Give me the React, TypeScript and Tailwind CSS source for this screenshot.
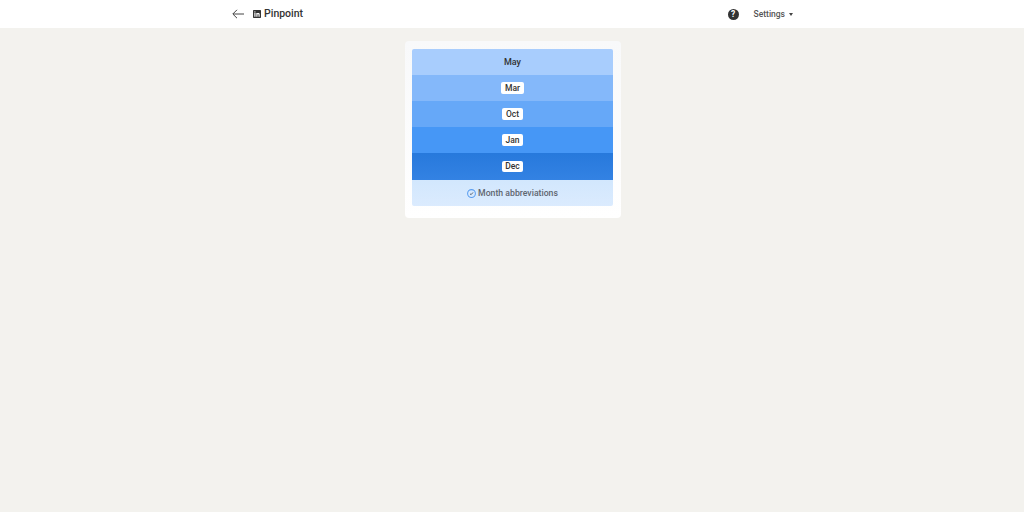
import React from 'react';

const rows = [
  { label: 'Mar', color: 'bg-[#84b8fa]' },
  { label: 'Oct', color: 'bg-[#66a8f8]' },
  { label: 'Jan', color: 'bg-[#4697f6]' },
];

function Chip({ label }: { label: string }) {
  return (
    <span className="bg-white rounded-[2px] px-[3.500px] h-[11.500px] flex items-center justify-center text-[8.5px] font-medium text-[#333] leading-none">
      {label}
    </span>
  );
}

export default function App() {
  return (
    <div className="min-h-[512px] bg-[#f3f2ee] font-['Roboto','Noto_Sans',sans-serif]">
      <header className="h-[28px] bg-white flex items-center pl-[232px] pr-[231px]">
        <svg viewBox="0 0 12 10" className="w-[12px] h-[10px]" fill="none" stroke="#444" strokeWidth="1">
          <path d="M12 5H1M5 .8 .8 5 5 9.200" />
        </svg>
        <div className="ml-[9px] flex items-center gap-[3px]">
          <svg viewBox="0 0 24 24" className="w-[8px] h-[8px]" fill="#333">
            <path d="M2 0h20a2 2 0 0 1 2 2v20a2 2 0 0 1-2 2H2a2 2 0 0 1-2-2V2a2 2 0 0 1 2-2zm2 9v11h3.5V9H4zm1.75-5.2a2 2 0 1 0 0 4 2 2 0 0 0 0-4zM10 9v11h3.5v-6c0-3 3-3 3 0v6H20v-7c0-5-4.8-5-6.500-3V9H10z" fillRule="evenodd" />
          </svg>
          <span className="pt-[1px] text-[10.5px] font-medium text-[#333] leading-none">Pinpoint</span>
        </div>
        <div className="ml-auto flex items-center">
          <span className="w-[11px] h-[11px] rounded-full bg-[#333] text-white text-[8.5px] font-bold flex items-center justify-center leading-none">?</span>
          <span className="ml-[15px] pt-[1px] text-[8.5px] font-medium text-[#555] leading-none">Settings</span>
          <span className="ml-[4px] w-0 h-0 border-x-[2.500px] border-x-transparent border-t-[3px] border-t-[#444]" />
        </div>
      </header>
      <main className="flex justify-center pt-[13px] pl-[1px]">
        <div className="w-[216px] h-[177px] pt-[8px] px-[7.500px] rounded-[4px] bg-gradient-to-b from-[#f8f9fa] to-white">
          <div className="w-[201px] rounded-[2px] overflow-hidden">
            <div className="h-[26px] pt-[1px] bg-[#a8cdfd] flex items-center justify-center text-[9px] font-medium text-[#333]">May</div>
            {rows.map((r) => (
              <div key={r.label} className={`h-[26px] flex items-center justify-center ${r.color}`}>
                <Chip label={r.label} />
              </div>
            ))}
            <div className="h-[27px] bg-gradient-to-b from-[#2779dc] to-[#3382e3] flex items-center justify-center">
              <Chip label="Dec" />
            </div>
            <div className="h-[26px] pt-[1px] bg-gradient-to-b from-[#d2e7fd] to-[#dbebfe] flex items-center justify-center gap-[2px] text-[8.7px] font-medium text-[#5f6670]">
              <svg viewBox="0 0 12 12" className="w-[9px] h-[9px]" fill="none">
                <circle cx="6" cy="6" r="5.2" stroke="#5d9ff0" strokeWidth="1.4" />
                <path d="M4 6.300 5.400 7.600 8 4.600" stroke="#4a5668" strokeWidth="1.200" />
              </svg>
              <span>Month abbreviations</span>
            </div>
          </div>
        </div>
      </main>
    </div>
  );
}
